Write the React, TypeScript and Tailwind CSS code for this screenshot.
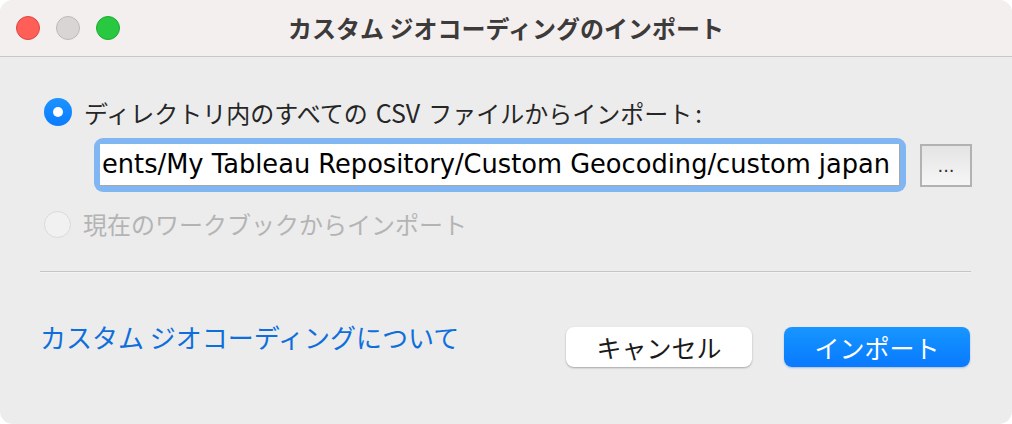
import React from "react";

const jp = { fontFamily: '"Noto Sans CJK JP", "Noto Sans", sans-serif' };
const mono = { fontFamily: '"DejaVu Sans", "Liberation Sans", sans-serif' };

export default function App() {
  return (
    <div className="w-[1012px] h-[424px] bg-white">
      <div className="w-full h-full rounded-[13px] overflow-hidden bg-[#ececec] flex flex-col" style={jp}>
        {/* Title bar */}
        <div className="h-[57px] shrink-0 bg-[#f4efef] border-b border-[#cbc7c7] grid grid-cols-[1fr_auto_1fr] items-center">
          <div className="flex items-center gap-[16px] pl-[16px]">
            <span className="w-[24px] h-[24px] rounded-full bg-[#ff5f57] border border-[#e0443e]" />
            <span className="w-[24px] h-[24px] rounded-full bg-[#d9d5d5] border border-[#bfbaba]" />
            <span className="w-[24px] h-[24px] rounded-full bg-[#28c840] border border-[#1eaa31]" />
          </div>
          <div className="text-[24px] font-bold text-[#3d3a3a] leading-none">
            カスタム ジオコーディングのインポート
          </div>
          <div />
        </div>

        {/* Body */}
        <div className="flex-1 px-[40px] pt-[41px] flex flex-col">
          {/* Radio 1 */}
          <div className="flex items-center h-[28px]">
            <span className="ml-[4px] w-[28px] h-[28px] rounded-full bg-gradient-to-b from-[#1c93ff] to-[#0a7cff] flex items-center justify-center">
              <span className="w-[10px] h-[10px] rounded-full bg-white" />
            </span>
            <span className="ml-[12px] text-[24px] text-[#262626] leading-none whitespace-nowrap">
              ディレクトリ内のすべての<span className="mx-[8px] text-[25px]">CSV</span>ファイルからインポート<span className="ml-[3px]">:</span>
            </span>
          </div>

          {/* Input row */}
          <div className="flex items-center mt-[12px] ml-[54px]">
            <div className="w-[812px] h-[54px] rounded-[9px] bg-[#80b6f2] p-[6px] flex">
              <div className="flex-1 bg-white border-b border-r border-[#a8a8a8] overflow-hidden flex items-center pl-[2px]">
                <span className="whitespace-nowrap text-[25.7px] text-black leading-none" style={mono}>
                  ents/My Tableau Repository/Custom Geocoding/custom japan
                </span>
              </div>
            </div>
            <div className="ml-[14px] w-[52px] h-[43px] border-2 border-[#b2b2b2] bg-gradient-to-b from-[#e4e4e4] to-[#f6f6f6] flex items-center justify-center">
              <span className="text-[18px] text-[#333] leading-none mt-[2px]" style={mono}>...</span>
            </div>
          </div>

          {/* Radio 2 (disabled) */}
          <div className="flex items-center h-[28px] mt-[18px]">
            <span className="ml-[4px] w-[27px] h-[27px] rounded-full bg-[#f1f1f1] border border-[#dadada]" />
            <span className="ml-[12px] text-[24px] text-[#b4b4b4] leading-none">
              現在のワークブックからインポート
            </span>
          </div>

          {/* Separator */}
          <div className="mt-[33px] mr-[1px] h-[1px] bg-[#c6c6c6]" />
          <div className="mr-[1px] h-[1px] bg-[#f3f3f3]" />

          {/* Bottom row */}
          <div className="mt-[52px] mr-[2px] flex items-start justify-between">
            <span className="text-[26px] leading-[24px] text-[#0e6fdc]">
              カスタム ジオコーディングについて
            </span>
            <div className="flex gap-[32px] mt-[2px]">
              <div className="w-[186px] h-[40px] rounded-[8px] bg-white shadow-[0_1px_2px_rgba(0,0,0,0.3)] flex items-center justify-center text-[25px] text-[#1a1a1a] leading-none">
                キャンセル
              </div>
              <div className="w-[186px] h-[40px] rounded-[8px] bg-gradient-to-b from-[#1896ff] to-[#0a79ff] shadow-[0_1px_2px_rgba(0,80,200,0.3)] flex items-center justify-center text-[25px] text-white leading-none">
                インポート
              </div>
            </div>
          </div>
        </div>
      </div>
    </div>
  );
}
